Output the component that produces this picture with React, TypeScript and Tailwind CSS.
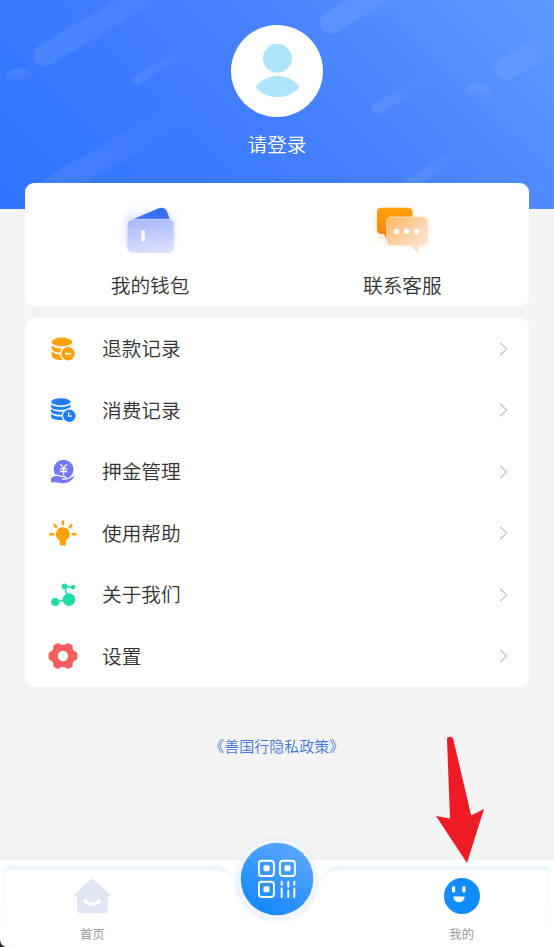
import type { ReactNode } from "react";

type MenuItem = {
  label: string;
  icon: ReactNode;
};

function HeaderBackdrop() {
  return (
    <svg className="absolute inset-0 h-full w-full" viewBox="0 0 554 209" preserveAspectRatio="none">
      <defs>
        <linearGradient id="sky" gradientUnits="userSpaceOnUse" x1="90" y1="290" x2="470" y2="-90">
          <stop offset="0" stopColor="#2f73ff" />
          <stop offset="0.5" stopColor="#437fff" />
          <stop offset="1" stopColor="#5e9bff" />
        </linearGradient>
        <linearGradient id="streak" x1="0" y1="0" x2="1" y2="0">
          <stop offset="0" stopColor="#fff" stopOpacity="0.09" />
          <stop offset="1" stopColor="#fff" stopOpacity="0" />
        </linearGradient>
        <linearGradient id="puff" x1="0" y1="0" x2="0" y2="1">
          <stop offset="0" stopColor="#fff" stopOpacity="0.1" />
          <stop offset="1" stopColor="#fff" stopOpacity="0" />
        </linearGradient>
      </defs>
      <rect width="554" height="209" fill="url(#sky)" />
      <g fill="url(#streak)">
        <rect x="0" y="0" width="190" height="22" rx="11" transform="translate(29 52) rotate(-31)" />
        <rect x="0" y="0" width="62" height="9" rx="4.5" transform="translate(131 78) rotate(-31)" />
        <rect x="0" y="0" width="170" height="24" rx="12" transform="translate(27 190) rotate(-31)" />
        <rect x="0" y="0" width="130" height="22" rx="11" transform="translate(316 19) rotate(-31)" />
        <rect x="0" y="0" width="66" height="10" rx="5" transform="translate(370 107) rotate(-31)" />
        <rect x="0" y="0" width="70" height="22" rx="11" transform="translate(491 65) rotate(-31)" />
        <rect x="0" y="0" width="78" height="10" rx="5" transform="translate(400 184) rotate(-33)" />
      </g>
      <path d="M5 78a13.5 9.500 0 0 1 27 0q-3 5.500-13.500 5.500T5 78Z" fill="url(#puff)" />
      <path d="M465 92a13 9 0 0 1 26 0q-3 6-13 6t-13-6Z" fill="url(#puff)" />
    </svg>
  );
}

function Avatar() {
  return (
    <svg className="h-[92px] w-[92px]" viewBox="0 0 92 92">
      <circle cx="46" cy="46" r="46" fill="#fff" />
      <circle cx="46.500" cy="33.200" r="14.500" fill="#b0e5ff" />
      <path d="M24.500 62C30 54.500 38 51 46.500 51S63 54.500 68.500 62C63 69 55 72.200 46.500 72.200S30 69 24.500 62Z" fill="#b0e5ff" />
    </svg>
  );
}

function WalletIcon() {
  return (
    <svg className="h-[64px] w-[68px]" viewBox="0 0 68 64">
      <defs>
        <linearGradient id="walletFront" x1="0.4" y1="0" x2="0.6" y2="1">
          <stop offset="0" stopColor="#a9b9fc" />
          <stop offset="1" stopColor="#dae1ff" />
        </linearGradient>
        <linearGradient id="walletBack" x1="0" y1="1" x2="1" y2="0">
          <stop offset="0" stopColor="#4a78f5" />
          <stop offset="1" stopColor="#2f68ee" />
        </linearGradient>
        <filter id="walletGlow" x="-30%" y="-30%" width="160%" height="160%">
          <feGaussianBlur stdDeviation="4" />
        </filter>
      </defs>
      <rect x="9" y="13" width="50" height="32" rx="8" fill="#8ea8ff" opacity="0.25" filter="url(#walletGlow)" />
      <path d="M14 20.500 41.500 8.800c4.500-2 8.100-.8 9.600 3L54 20v6H14Z" fill="url(#walletBack)" />
      <rect x="11.300" y="19.300" width="46.500" height="33" rx="5.500" fill="url(#walletFront)" stroke="#d5deff" strokeWidth="0.900" />
      <rect x="25.500" y="30" width="3.200" height="11.500" rx="1.300" fill="#fff" />
    </svg>
  );
}

function ServiceIcon() {
  return (
    <svg className="h-[64px] w-[68px]" viewBox="0 0 68 64">
      <defs>
        <linearGradient id="chatFront" x1="0" y1="0" x2="1" y2="1">
          <stop offset="0" stopColor="#ffb65c" />
          <stop offset="0.5" stopColor="#fed3aa" />
          <stop offset="1" stopColor="#ffece2" />
        </linearGradient>
        <linearGradient id="chatBack" x1="0" y1="0" x2="0" y2="1">
          <stop offset="0" stopColor="#ffa20d" />
          <stop offset="1" stopColor="#f97f0c" />
        </linearGradient>
        <filter id="chatGlow" x="-30%" y="-30%" width="160%" height="160%">
          <feGaussianBlur stdDeviation="3.5" />
        </filter>
      </defs>
      <path d="M9 9h36v10h12v24H22l-13-5Z" fill="#ffb56b" opacity="0.28" filter="url(#chatGlow)" />
      <path d="M13.500 7.800h26.500c3 0 4.500 1.500 4.500 4.500V34H20v8l-4-8h-2.500c-3 0-4.500-1.500-4.500-4.500V12.300c0-3 1.500-4.500 4.500-4.500Z" fill="url(#chatBack)" />
      <path
        d="M23.500 17h31.500c3.200 0 4.800 1.600 4.800 4.800v19c0 3.200-1.600 4.700-4.800 4.700h-5v6.800L42 45.500H23.500c-3 0-4.600-1.500-4.600-4.700v-19c0-3.200 1.600-4.800 4.600-4.800Z"
        fill="url(#chatFront)"
        stroke="#ffe6cf"
        strokeWidth="0.900"
      />
      <g fill="#fff">
        <circle cx="28.500" cy="31.200" r="2.700" />
        <circle cx="38.500" cy="31.200" r="2.700" />
        <circle cx="48.500" cy="31.200" r="2.700" />
      </g>
    </svg>
  );
}

function RefundIcon() {
  return (
    <svg className="h-7 w-7" viewBox="0 0 28 28">
      <g fill="#ffa10a">
        <ellipse cx="13" cy="7" rx="10.300" ry="4.400" />
        <path d="M2.700 10.300c2 2.300 5.600 3.300 10.300 3.300s8.500-1 10.300-3.300v3.400c-1.600 2.700-5.300 4-10.300 4s-10.300-1.700-10.300-4.300Z" />
        <path d="M2.700 16c2 2.600 5.600 3.700 10.300 3.700h2v5.300h-2c-5.500 0-10.300-1.500-10.300-4.200Z" />
      </g>
      <circle cx="19" cy="18.700" r="7.400" fill="#ffa10a" stroke="#fff" strokeWidth="1.300" />
      <path d="M15.600 18.600l2.200-1.700v1h4.300v1.500h-4.300v1Z" fill="#fff" />
    </svg>
  );
}

function ConsumeIcon() {
  return (
    <svg className="h-7 w-7" viewBox="0 0 28 28">
      <g fill="#1f7eff">
        <ellipse cx="11.800" cy="5.800" rx="9.700" ry="3.600" />
        <path d="M2.100 8.300c2 1.700 5.300 2.600 9.700 2.600s7.900-.9 9.700-2.600v2.700c-1.600 2-5.200 3-9.700 3s-9.700-1-9.700-3Z" />
        <path d="M2.100 13.100c2 1.700 5.300 2.600 9.700 2.600s7.900-.9 9.700-2.600v2.700c-1.600 2-5.200 3-9.700 3s-9.700-1-9.700-3Z" />
        <path d="M2.100 18c2 1.700 5.300 2.600 9.700 2.600h3v3.300h-3c-5 0-9.700-1-9.700-3.200Z" />
      </g>
      <circle cx="20.300" cy="19.800" r="6.900" fill="#1f7eff" stroke="#fff" strokeWidth="1.300" />
      <path d="M19.700 16.200v4h3.200" fill="none" stroke="#fff" strokeWidth="1.300" />
    </svg>
  );
}

function DepositIcon() {
  return (
    <svg className="h-7 w-7" viewBox="0 0 28 28">
      <circle cx="14.600" cy="11.600" r="9.900" fill="#7678fb" />
      <path
        d="M1.500 19.800c3.200-2.700 6.800-3.300 9.800-1.700l4 .3c2 .2 2 2.300 0 2.500l-2 .2c4 .4 6.500-.3 9.200-2.300 2.300-1.500 4.600-.6 2.800 1.300-3.300 3.700-7 5.800-11 5.800-3.700 0-5.200-1.200-8-1H1.500Z"
        fill="#7678fb"
        stroke="#fff"
        strokeWidth="1.100"
      />
      <path d="M11.400 6.200l3.200 4 3.200-4M14.600 10.200v6.500M10.900 10.800h7.400M10.900 13.500h7.400" fill="none" stroke="#fff" strokeWidth="1.300" />
    </svg>
  );
}

function HelpIcon() {
  return (
    <svg className="h-7 w-7" viewBox="0 0 28 28">
      <path d="M14 8.200a7 7 0 0 0-3.300 13.200v3.600c0 1 .5 1.500 1.500 1.500h3.200c1 0 1.500-.5 1.500-1.500v-3.600A7 7 0 0 0 14 8.200Z" fill="#ffa10a" />
      <path d="M14 2.600v2.500M1.300 15.200h3M23.700 15.200h3M5.500 6.200l1.900 1.900M22.500 6.200l-1.900 1.900" stroke="#ffa10a" strokeWidth="2.500" strokeLinecap="round" />
    </svg>
  );
}

function AboutIcon() {
  return (
    <svg className="h-7 w-7" viewBox="0 0 28 28">
      <path d="M6 21l13-2.800L15.800 5.500l8 .7" fill="none" stroke="#1fdca9" strokeWidth="1.400" />
      <g fill="#1fdca9">
        <circle cx="6.200" cy="21" r="4" />
        <circle cx="20" cy="18.600" r="6.300" />
        <circle cx="15.600" cy="5.400" r="2.900" />
        <circle cx="24" cy="6.200" r="2.200" />
      </g>
    </svg>
  );
}

function SettingsIcon() {
  return (
    <svg className="h-7 w-7 overflow-visible" viewBox="0 0 28 28">
      <path
        d="M8 1.400c1-.5 2-.2 2.800.6 1.500 1.200 4.900 1.200 6.400 0 .8-.8 1.800-1.100 2.800-.6l2.700 1.400c.8.500 1.100 1.400.9 2.300-.3 2 .8 3.800 2.800 4.600 1.200.4 2 1.100 2 2.300v4c0 1.200-.8 1.900-2 2.300-2 .8-3.100 2.600-2.800 4.600.2.900-.1 1.800-.9 2.300L20 26.600c-1 .5-2 .2-2.800-.6-1.500-1.200-4.900-1.200-6.400 0-.8.8-1.800 1.100-2.800.6l-2.700-1.400c-.8-.5-1.100-1.400-.9-2.300.3-2-.8-3.800-2.800-4.600-1.200-.4-2-1.100-2-2.300v-4c0-1.200.8-1.900 2-2.300 2-.8 3.100-2.600 2.800-4.600-.2-.9.100-1.800.9-2.300Z"
        fill="#f75e60"
      />
      <circle cx="14" cy="14" r="5.200" fill="#fff" />
    </svg>
  );
}

function HomeIcon() {
  return (
    <svg className="h-9 w-[38px]" viewBox="0 0 38 36">
      <path
        d="M16.800 2c1.600-1.500 3-1.500 4.600 0L37 16.700c1 1 .7 1.700-.6 1.700h-1.700v13c0 2.600-1.200 3.900-3.800 3.900H7.800c-2.600 0-3.800-1.300-3.800-3.900v-13H1.900c-1.300 0-1.600-.7-.6-1.700Z"
        fill="#e1e6f5"
      />
      <path d="M12.200 22.600c3.300 5 10.700 5 14.300 0" fill="none" stroke="#fff" strokeWidth="3" strokeLinecap="round" />
    </svg>
  );
}

function MineIcon() {
  return (
    <svg className="h-9 w-9" viewBox="0 0 36 36">
      <circle cx="18" cy="18" r="18" fill="#128bfd" />
      <rect x="8" y="8.300" width="3.200" height="6.300" rx="1.300" fill="#fff" />
      <rect x="18.300" y="8.300" width="3.200" height="6.300" rx="1.300" fill="#fff" />
      <path d="M10.300 18.600h9.400c.8 0 1.100.5.900 1.200-1.200 6-10 6-11.200 0-.2-.7.100-1.200.9-1.200Z" fill="#fff" />
    </svg>
  );
}

function ScanButton() {
  return (
    <svg className="h-[100px] w-[100px]" viewBox="0 0 100 100">
      <defs>
        <linearGradient id="scan" x1="0.75" y1="0.05" x2="0.25" y2="0.95">
          <stop offset="0" stopColor="#5aa7fd" />
          <stop offset="1" stopColor="#1488ff" />
        </linearGradient>
        <filter id="scanGlow" x="-20%" y="-20%" width="140%" height="140%">
          <feGaussianBlur stdDeviation="2.2" />
        </filter>
      </defs>
      <circle cx="50" cy="50.500" r="40" fill="#c0deff" opacity="0.6" filter="url(#scanGlow)" />
      <circle cx="50" cy="50" r="39.700" fill="#f2f7ff" />
      <circle cx="50" cy="50" r="36.300" fill="url(#scan)" />
      <g fill="none" stroke="#fff" strokeWidth="1.900">
        <rect x="31.900" y="31.700" width="15" height="15.300" rx="3" />
        <rect x="53" y="31.700" width="15" height="15.300" rx="3" />
        <rect x="31.900" y="52.700" width="15" height="15.300" rx="3" />
      </g>
      <g fill="#fff">
        <rect x="36.500" y="36.300" width="6" height="6" rx="1.500" />
        <rect x="57.500" y="36.300" width="6" height="6" rx="1.500" />
        <rect x="36.500" y="57.300" width="6" height="6" rx="1.500" />
      </g>
      <path d="M54.700 52.700v3M54.700 59.500v8.500M61.300 52.700v5M61.300 61.500v6.500M67.300 52.700v3M67.300 59.500v8.500" stroke="#fff" strokeWidth="2" strokeLinecap="round" />
    </svg>
  );
}

function TabBarOutline() {
  return (
    <svg className="absolute inset-0 h-full w-full" viewBox="0 0 554 87">
      <defs>
        <filter id="edge" x="-5%" y="-20%" width="110%" height="140%">
          <feGaussianBlur stdDeviation="1.5" />
        </filter>
        <linearGradient id="edgeFade" gradientUnits="userSpaceOnUse" x1="0" y1="8" x2="0" y2="87">
          <stop offset="0" stopColor="#e2f0fd" />
          <stop offset="0.12" stopColor="#f2f8fe" />
          <stop offset="0.5" stopColor="#f8fbff" />
          <stop offset="1" stopColor="#fdfeff" />
        </linearGradient>
      </defs>
      <path
        d="M5 90V12Q5 8 10 8H210C226 8 232 14 236 27C243 51 259 62 277 62S311 51 318 27C322 14 328 8 344 8H543Q548 8 548 12V90"
        fill="#fff"
        stroke="url(#edgeFade)"
        strokeWidth="3"
        filter="url(#edge)"
      />
      <path
        d="M6 90V13Q6 9.500 11 9.500H210C225 9.500 230 15 234 28C241 53 259 65 277 65S313 53 320 28C324 15 329 9.500 344 9.500H542Q547 9.500 547 13V90Z"
        fill="#fff"
      />
      <path d="M0 79v8h6C2 86 0 83 0 79Z" fill="#25282c" />
    </svg>
  );
}

const menuItems: MenuItem[] = [
  { label: "退款记录", icon: <RefundIcon /> },
  { label: "消费记录", icon: <ConsumeIcon /> },
  { label: "押金管理", icon: <DepositIcon /> },
  { label: "使用帮助", icon: <HelpIcon /> },
  { label: "关于我们", icon: <AboutIcon /> },
  { label: "设置", icon: <SettingsIcon /> },
];

export default function App() {
  return (
    <div className="relative flex h-[947px] w-[554px] flex-col overflow-hidden bg-[#f4f4f4] font-['Noto_Sans_CJK_SC',sans-serif] font-[350] text-[#333]">
      <header className="relative h-[209px] shrink-0">
        <HeaderBackdrop />
        <div className="relative flex flex-col items-center pt-[24.500px]">
          <Avatar />
          <p className="mt-[12.500px] text-[19.500px] leading-[30px] text-white">请登录</p>
        </div>
      </header>

      <main className="relative -mt-[26.500px] flex flex-1 flex-col pr-[25px] pl-[24.500px]">
        <section className="grid h-[123px] shrink-0 grid-cols-2 rounded-[9px] bg-white">
          <button type="button" className="flex flex-col items-center pt-[17px] pr-[1px]">
            <WalletIcon />
            <span className="mt-[6px] text-[19.700px] leading-[30px]">我的钱包</span>
          </button>
          <button type="button" className="flex flex-col items-center pt-[17px] pr-[1px]">
            <ServiceIcon />
            <span className="mt-[6px] text-[19.700px] leading-[30px]">联系客服</span>
          </button>
        </section>

        <ul className="mt-[12.500px] shrink-0 rounded-[9px] bg-white">
          {menuItems.map((item) => (
            <li key={item.label} className="flex h-[61.500px] items-center pr-[21.500px] pl-[24.500px]">
              {item.icon}
              <span className="ml-[25px] flex-1 pb-px text-[19.700px] leading-[30px]">{item.label}</span>
              <svg className="h-[14px] w-[9px]" viewBox="0 0 9 14">
                <path d="M1 .8 7.700 7 1 13.200" fill="none" stroke="#c4c4c4" strokeWidth="1.200" />
              </svg>
            </li>
          ))}
        </ul>

        <a href="#privacy" className="mt-[47px] text-center text-[15px] leading-6 text-[#3e77e0]">
          《善国行隐私政策》
        </a>
      </main>

      <nav className="relative grid h-[87px] shrink-0 grid-cols-3 bg-white text-[12.300px] leading-[18px] text-[#8f8f8f]">
        <TabBarOutline />
        <div className="relative flex flex-col items-center pt-[18px]">
          <HomeIcon />
          <span className="mt-[11px]">首页</span>
        </div>
        <div className="relative -mt-[31px] flex justify-center">
          <ScanButton />
        </div>
        <div className="relative flex flex-col items-center pt-[18px]">
          <MineIcon />
          <span className="mt-[11px]">我的</span>
        </div>
      </nav>

      {/* Pointer to the "我的" tab */}
      <svg className="absolute top-[734px] left-[432px] h-[132px] w-[56px]" viewBox="0 0 56 132">
        <path d="M15 5C15.500 2 20.500 2 21.200 5L39.200 81.500 52 75 35 129 4 82 18 84.500Z" fill="#ed1c24" />
      </svg>
    </div>
  );
}
